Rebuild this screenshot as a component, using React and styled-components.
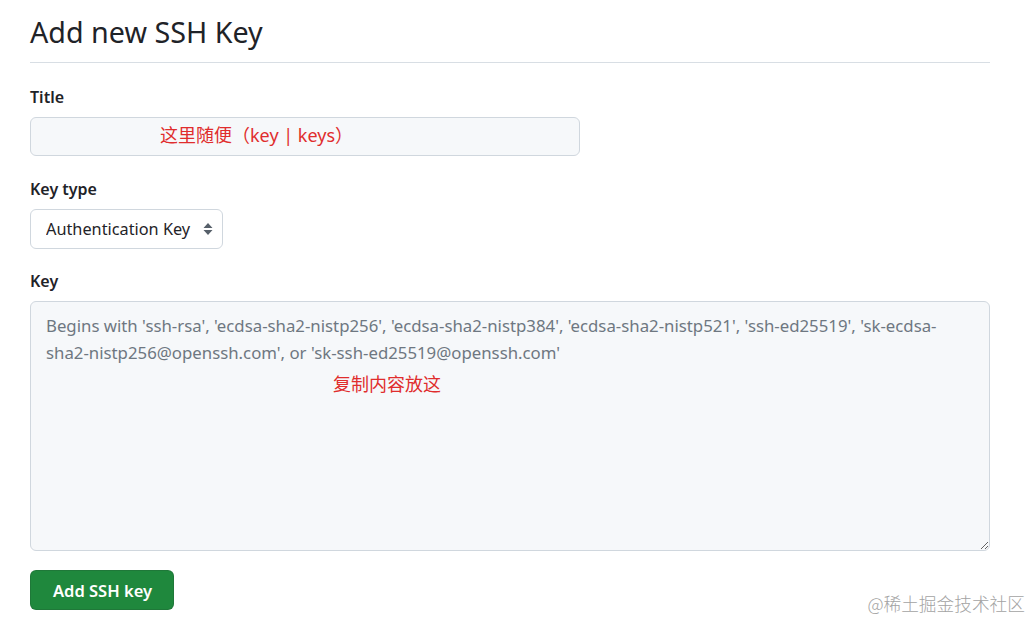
import React from 'react';
import styled, { createGlobalStyle } from 'styled-components';

const GlobalStyle = createGlobalStyle`
  html, body {
    margin: 0;
    padding: 0;
    background: #ffffff;
  }
  body {
    font-family: "Noto Sans", "Open Sans", "Noto Sans CJK SC", sans-serif;
    color: #1f2328;
  }
`;

const Page = styled.div`
  position: relative;
  width: 1031px;
  height: 622px;
  padding: 0 41px 0 30px;
  box-sizing: border-box;
  overflow: hidden;
`;

const Header = styled.h2`
  margin: 0;
  padding: 12px 0 10px;
  font-size: 28.7px;
  font-weight: 400;
  line-height: 40px;
  border-bottom: 1px solid #d8dee4;
`;

const Form = styled.form`
  display: flex;
  flex-direction: column;
`;

const Group = styled.div`
  display: flex;
  flex-direction: column;
  align-items: flex-start;
  margin-top: ${(p) => p.top || 20}px;
`;

const Label = styled.label`
  font-size: 16px;
  font-weight: 600;
  line-height: 24px;
  margin-bottom: 8px;
`;

const Field = styled.div`
  position: relative;
  width: ${(p) => p.width || '100%'};
`;

const Input = styled.input`
  display: block;
  width: 100%;
  box-sizing: border-box;
  height: 39px;
  padding: 5px 15px;
  font: inherit;
  font-size: 16px;
  background: #f6f8fa;
  border: 1px solid #d0d7de;
  border-radius: 6px;
  outline: none;
`;

const Note = styled.span`
  position: absolute;
  left: ${(p) => p.left}px;
  top: ${(p) => p.top}px;
  color: #e02d2d;
  font-size: 18px;
  line-height: 22px;
  font-family: "Noto Sans", "Noto Sans CJK SC", sans-serif;
  pointer-events: none;
  white-space: nowrap;
`;

const SelectWrap = styled.div`
  position: relative;
  display: inline-flex;
`;

const Select = styled.select`
  appearance: none;
  -webkit-appearance: none;
  height: 40px;
  padding: 0 31px 0 15px;
  font: inherit;
  font-size: 16.3px;
  color: #1f2328;
  background: #ffffff;
  border: 1px solid #d0d7de;
  border-radius: 6px;
  outline: none;
`;

const Caret = styled.svg`
  position: absolute;
  right: 10px;
  top: 13px;
  pointer-events: none;
`;

const TextArea = styled.textarea`
  display: block;
  width: 100%;
  height: 250px;
  box-sizing: border-box;
  padding: 10px 15px;
  font: inherit;
  font-size: 16.8px;
  line-height: 27px;
  background: #f6f8fa;
  border: 1px solid #d0d7de;
  border-radius: 6px;
  resize: vertical;
  outline: none;

  &::placeholder {
    color: #6e7781;
  }
`;

const Button = styled.button`
  align-self: flex-start;
  margin-top: 19px;
  height: 40px;
  padding: 0 21px 0 22px;
  font: inherit;
  font-size: 16.5px;
  font-weight: 600;
  color: #ffffff;
  background: #1f883d;
  border: 1px solid rgba(31, 35, 40, 0.15);
  border-radius: 6px;
  cursor: pointer;
`;

const Watermark = styled.span`
  position: absolute;
  right: 6px;
  bottom: 6px;
  font-family: "Noto Sans CJK SC", sans-serif;
  font-weight: 300;
  font-size: 17.7px;
  color: #a3a3a3;
`;

const placeholder =
  "Begins with 'ssh-rsa', 'ecdsa-sha2-nistp256', 'ecdsa-sha2-nistp384', 'ecdsa-sha2-nistp521', 'ssh-ed25519', 'sk-ecdsa-sha2-nistp256@openssh.com', or 'sk-ssh-ed25519@openssh.com'";

export default function App() {
  return (
    <Page>
      <GlobalStyle />
      <Header>Add new SSH Key</Header>
      <Form onSubmit={(e) => e.preventDefault()}>
        <Group top={22}>
          <Label htmlFor="title">Title</Label>
          <Field width="550px">
            <Input id="title" />
            <Note left={130} top={7}>这里随便（key | keys）</Note>
          </Field>
        </Group>
        <Group top={21}>
          <Label htmlFor="type">Key type</Label>
          <SelectWrap>
            <Select id="type" defaultValue="auth">
              <option value="auth">Authentication Key</option>
              <option value="sign">Signing Key</option>
            </Select>
            <Caret width="10" height="14" viewBox="0 0 10 14">
              <path d="M5 1 L9.5 6 H0.5 Z M5 13 L9.5 8 H0.5 Z" fill="#57606a" />
            </Caret>
          </SelectWrap>
        </Group>
        <Group top={20}>
          <Label htmlFor="key">Key</Label>
          <Field>
            <TextArea id="key" placeholder={placeholder} />
            <Note left={303} top={72}>复制内容放这</Note>
          </Field>
        </Group>
        <Button type="submit">Add SSH key</Button>
      </Form>
      <Watermark>@稀土掘金技术社区</Watermark>
    </Page>
  );
}
